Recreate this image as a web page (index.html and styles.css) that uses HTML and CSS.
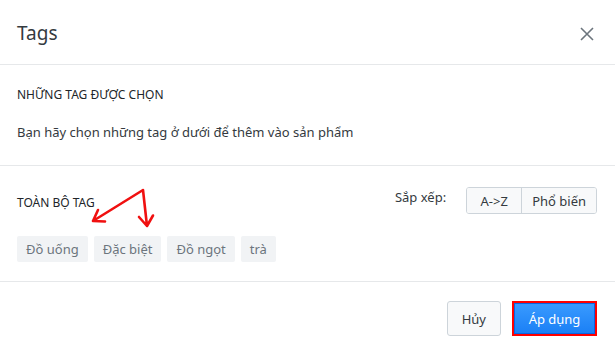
FILE: index.html
```html
<!DOCTYPE html>
<html lang="vi">
<head>
    <meta charset="UTF-8">
    <meta name="viewport" content="width=device-width, initial-scale=1.0">
    <title>Tags</title>
    <link rel="stylesheet" href="styles.css">
</head>
<body>
<div class="modal">
    <div class="modal-header">
        <h1>Tags</h1>
        <button class="close" aria-label="Đóng">
            <svg width="14" height="14" viewBox="0 0 14 14"><path d="M1 1L13 13M13 1L1 13" stroke="#6c757d" stroke-width="1.6" fill="none"/></svg>
        </button>
    </div>

    <div class="section selected">
        <h2>NHỮNG TAG ĐƯỢC CHỌN</h2>
        <p>Bạn hãy chọn những tag ở dưới để thêm vào sản phẩm</p>
    </div>

    <div class="section all">
        <div class="all-head">
            <h2>TOÀN BỘ TAG</h2>
            <div class="sort">
                <span>Sắp xếp:</span>
                <div class="btn-group">
                    <button>A-&gt;Z</button>
                    <button>Phổ biến</button>
                </div>
            </div>
        </div>
        <div class="tags">
            <span class="tag">Đồ uống</span>
            <span class="tag">Đặc biệt</span>
            <span class="tag">Đồ ngọt</span>
            <span class="tag">trà</span>
        </div>
        <svg class="arrows" width="80" height="50" viewBox="0 0 80 50">
            <path d="M63 4L13 35M25 35.5L13 35L18 24M63 4L67 40M73 29.5L67 40L59 31" stroke="#f01010" stroke-width="2.6" fill="none" stroke-linecap="round" stroke-linejoin="round"/>
        </svg>
    </div>

    <div class="modal-footer">
        <button class="btn">Hủy</button>
        <button class="btn primary">Áp dụng</button>
    </div>
</div>
</body>
</html>
```

FILE: styles.css
```css
body { margin: 0; background: #fff; font-family: "Noto Sans", "Open Sans", sans-serif; color: #212529; }
.modal { width: 615px; height: 350px; position: relative; }
.modal-header { height: 65px; box-sizing: border-box; padding: 0 17px; display: flex; align-items: center; justify-content: space-between; border-bottom: 1px solid #e6e8ea; }
.modal-header h1 { margin: 2px 0 0; font-size: 19px; font-weight: 400; color: #343a40; }
.close { border: 0; background: none; padding: 0; margin-right: 4px; margin-top: 3px; display: flex; }
.section { padding: 0 17px; border-bottom: 1px solid #e6e8ea; }
h2 { margin: 0; font-size: 12px; font-weight: 400; color: #212529; }
.selected { height: 101px; box-sizing: border-box; padding-top: 21px; }
.selected p { margin: 20px 0 0; font-size: 13px; color: #343a40; }
.all { height: 116px; box-sizing: border-box; padding-top: 21px; position: relative; }
.all-head { display: flex; justify-content: space-between; align-items: flex-start; }
.all-head h2 { margin-top: 7px; }
.sort { display: flex; align-items: center; margin-right: 1px; font-size: 13px; color: #343a40; }
.sort span { margin-right: 20px; margin-top: -8px; }
.btn-group { display: flex; border: 1px solid #cdd4da; border-radius: 3px; overflow: hidden; }
.btn-group button { font: inherit; font-size: 13px; color: #343a40; background: #f8f9fa; border: 0; height: 25px; padding: 0 10px; }
.btn-group button + button { border-left: 1px solid #cdd4da; }
.btn-group button:first-child { width: 54px; }
.tags { display: flex; gap: 6px; margin-top: 22px; }
.tag { background: #f1f3f5; color: #6c757d; font-size: 13px; height: 26px; line-height: 26px; padding: 0 9px; border-radius: 2px; }
.arrows { position: absolute; left: 80px; top: 20px; }
.modal-footer { display: flex; justify-content: flex-end; gap: 11px; padding: 19px 18px 0 0; }
.btn { font: inherit; font-size: 13px; height: 35px; border-radius: 3px; border: 1px solid #cdd4da; background: #f8f9fa; color: #343a40; padding: 0 14px; }
.primary { border: 2px solid #f00; background: linear-gradient(#3a9bff, #1a7ff5); color: #fff; width: 85px; border-radius: 0; box-shadow: inset 0 0 0 1px #0a64e0; }
```
